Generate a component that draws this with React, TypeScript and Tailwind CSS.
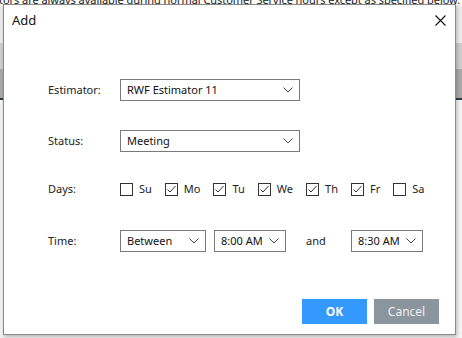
import * as React from 'react'

const days = [
  { name: 'Su', checked: false },
  { name: 'Mo', checked: true },
  { name: 'Tu', checked: true },
  { name: 'We', checked: true },
  { name: 'Th', checked: true },
  { name: 'Fr', checked: true },
  { name: 'Sa', checked: false },
]

function Chevron() {
  return (
    <svg width="10" height="6" viewBox="0 0 10 6" className="shrink-0">
      <polyline points="0.5,0.5 5,5 9.5,0.5" fill="none" stroke="#444" strokeWidth="1" />
    </svg>
  )
}

function Select({ value, width }: { value: string; width: string }) {
  return (
    <div
      className={`${width} h-[22px] flex items-center justify-between pl-[6px] pr-[6px] border border-[#7a7a7a] bg-white text-[11px] text-[#111]`}
    >
      <span>{value}</span>
      <Chevron />
    </div>
  )
}

function Checkbox({ checked }: { checked: boolean }) {
  return (
    <div className="w-[13px] h-[13px] border border-[#333] bg-white flex items-center justify-center">
      {checked && (
        <svg width="11" height="11" viewBox="0 0 11 11">
          <polyline points="1.5,5.5 4,8 9.5,2" fill="none" stroke="#333" strokeWidth="1" />
        </svg>
      )}
    </div>
  )
}

export default function App() {
  return (
    <div
      className="relative w-[462px] h-[338px] overflow-hidden bg-white"
      style={{ fontFamily: '"Noto Sans", "Open Sans", sans-serif' }}
    >
      {/* page behind the dialog */}
      <div className="flex flex-col h-full">
        <div className="h-[11px] -mt-[6px] leading-[11px] text-[11px] tracking-[-0.05px] text-[#222] whitespace-nowrap -ml-[1px]">
          tors are always available during normal Customer Service hours except as specified below.
        </div>
        <div className="h-[38px] bg-[#ececec]" />
        <div className="h-[26px] bg-[#cfcfcf]" />
        <div className="h-[29px] bg-[#ababab]" />
        <div className="h-[2px] bg-[#2e3b47]" />
        <div className="flex-1 bg-[#f4f4f4]" />
      </div>

      {/* dialog */}
      <div className="absolute left-[3px] top-[4px] w-[453px] h-[331px] bg-white border border-[#8a8a8a] shadow-[1px_2px_4px_rgba(0,0,0,0.25)] flex flex-col">
        <div className="flex items-center justify-between h-[31px] pl-[8px] pr-[8px]">
          <span className="text-[13px] text-[#111]">Add</span>
          <svg width="11" height="11" viewBox="0 0 11 11" className="mr-[1px]">
            <path d="M0.5 0.5 L10.5 10.5 M10.5 0.5 L0.5 10.5" stroke="#111" strokeWidth="1.1" />
          </svg>
        </div>

        <div className="flex flex-col pl-[44px] pt-[43px] text-[11px] text-[#222]">
          <div className="flex items-center h-[22px]">
            <span className="w-[72px]">Estimator:</span>
            <Select value="RWF Estimator 11" width="w-[180px]" />
          </div>

          <div className="flex items-center h-[22px] mt-[29px]">
            <span className="w-[72px]">Status:</span>
            <Select value="Meeting" width="w-[180px]" />
          </div>

          <div className="flex items-center h-[22px] mt-[26px]">
            <span className="w-[72px]">Days:</span>
            <div className="flex items-center gap-[13px]">
              {days.map(d => (
                <div key={d.name} className="flex items-center gap-[6px]">
                  <Checkbox checked={d.checked} />
                  <span>{d.name}</span>
                </div>
              ))}
            </div>
          </div>

          <div className="flex items-center h-[22px] mt-[30px]">
            <span className="w-[72px]">Time:</span>
            <Select value="Between" width="w-[86px]" />
            <div className="ml-[8px]">
              <Select value="8:00 AM" width="w-[72px]" />
            </div>
            <span className="ml-[20px] w-[45px]">and</span>
            <Select value="8:30 AM" width="w-[72px]" />
          </div>
        </div>

        <div className="mt-auto flex justify-end gap-[7px] pr-[16px] pb-[10px]">
          <button className="w-[65px] h-[25px] bg-[#3399ff] text-white text-[12px] font-bold">OK</button>
          <button className="w-[65px] h-[25px] bg-[#8a959e] text-[#f0f0f0] text-[12px]">Cancel</button>
        </div>
      </div>
    </div>
  )
}
